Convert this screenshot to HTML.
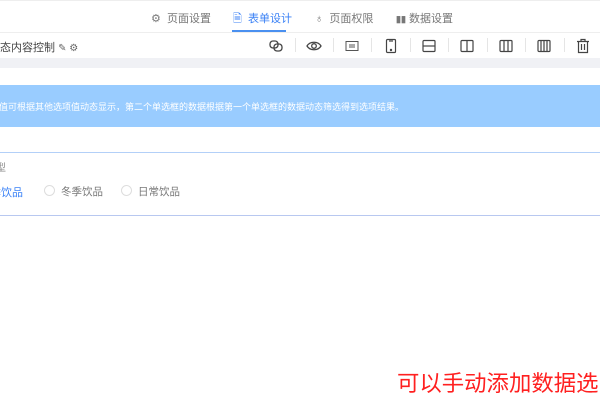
<!DOCTYPE html>
<html><head><meta charset="utf-8"><style>
*{margin:0;padding:0;box-sizing:border-box}
body{width:600px;height:400px;overflow:hidden;background:#fff;font-family:"Liberation Sans","Noto Sans CJK SC",sans-serif;position:relative}
.a{position:absolute;white-space:nowrap}
.tab{font-size:11px;color:#777;top:10px}
.sep{position:absolute;top:38px;width:1px;height:14px;background:#e5e5e5}
svg{position:absolute}
</style></head><body>
<div class="a" style="left:0;top:0;width:600px;height:1px;background:#eee"></div>
<div class="a" style="left:0;top:32px;width:600px;height:1px;background:#eee"></div>
<div class="a tab" style="left:151px">⚙&nbsp; 页面设置</div>
<div class="a tab" style="left:233px;color:#3b82f6">🗎&nbsp; 表单设计</div>
<div class="a" style="left:232px;top:30px;width:54px;height:2px;background:#4a90f0"></div>
<div class="a tab" style="left:315px">♁&nbsp; 页面权限</div>
<div class="a tab" style="left:396px"><b style="font-size:9px">▮▮</b> 数据设置</div>

<div class="a" style="left:0;top:39px;font-size:11px;color:#444">态内容控制 <span style="color:#666;font-size:10px">✎ ⚙</span></div>
<svg style="left:268px;top:39px" width="16" height="14" viewBox="0 0 16 14" fill="none" stroke="#444" stroke-width="1.3"><rect x="2" y="2" width="8" height="7" rx="3"/><rect x="6" y="5" width="8" height="7" rx="3"/></svg>
<div class="sep" style="left:295px"></div>
<svg style="left:306px;top:40px" width="16" height="12" viewBox="0 0 16 12" fill="none" stroke="#444" stroke-width="1.3"><path d="M1 6C4 1 12 1 15 6C12 11 4 11 1 6Z"/><circle cx="8" cy="6" r="2.3"/></svg>
<div class="sep" style="left:333px"></div>
<svg style="left:345px;top:40px" width="14" height="12" viewBox="0 0 14 12" fill="none" stroke="#555" stroke-width="1"><rect x="1" y="1.5" width="12" height="9"/><path d="M5 4v4M7 4v4M9 4v4"/></svg>
<div class="sep" style="left:371px"></div>
<svg style="left:385px;top:38px" width="12" height="16" viewBox="0 0 12 16" fill="none" stroke="#444" stroke-width="1.2"><rect x="1.5" y="1.5" width="9" height="13" rx="1"/><path d="M4 3h4"/><circle cx="6" cy="12" r=".6" fill="#444"/></svg>
<div class="sep" style="left:410px"></div>
<svg style="left:422px;top:39px" width="14" height="14" viewBox="0 0 14 14" fill="none" stroke="#444" stroke-width="1.2"><rect x="1" y="1.5" width="12" height="11" rx="1"/><path d="M1 7h12"/></svg>
<div class="sep" style="left:448px"></div>
<svg style="left:460px;top:39px" width="14" height="14" viewBox="0 0 14 14" fill="none" stroke="#444" stroke-width="1.2"><rect x="1" y="1.5" width="12" height="11" rx="1"/><path d="M7 1.5v11"/></svg>
<div class="sep" style="left:487px"></div>
<svg style="left:499px;top:39px" width="14" height="14" viewBox="0 0 14 14" fill="none" stroke="#444" stroke-width="1.2"><rect x="1" y="1.5" width="12" height="11" rx="1"/><path d="M5 1.5v11M9 1.5v11"/></svg>
<div class="sep" style="left:525px"></div>
<svg style="left:537px;top:39px" width="14" height="14" viewBox="0 0 14 14" fill="none" stroke="#444" stroke-width="1.2"><rect x="1" y="1.5" width="12" height="11" rx="1"/><path d="M4 1.5v11M7 1.5v11M10 1.5v11"/></svg>
<div class="sep" style="left:564px"></div>
<svg style="left:576px;top:38px" width="14" height="16" viewBox="0 0 14 16" fill="none" stroke="#444" stroke-width="1.2"><path d="M1 3.5h12M5 3.5V1.5h4v2M2.5 3.5v11h9v-11M5.5 6v6M8.5 6v6"/></svg>

<div class="a" style="left:0;top:58px;width:600px;height:10px;background:#f0f1f5"></div>

<div class="a" style="left:0;top:85px;width:600px;height:42px;background:#99ccff"></div>
<div class="a" style="left:-1px;top:100px;font-size:9px;color:#fff">值可根据其他选项值动态显示，第二个单选框的数据根据第一个单选框的数据动态筛选得到选项结果。</div>

<div class="a" style="left:0;top:152px;width:600px;height:1px;background:#b3d0f8"></div>
<div class="a" style="left:0;top:215px;width:600px;height:1px;background:#b8c8f0"></div>
<div class="a" style="left:-4px;top:159px;font-size:10px;color:#888">型</div>
<div class="a" style="left:-10px;top:184px;font-size:11px;color:#3b82f6">季饮品</div>
<div class="a" style="left:44px;top:185px;width:11px;height:11px;border:1px solid #ddd;border-radius:50%"></div>
<div class="a" style="left:61px;top:184px;font-size:10.5px;color:#777">冬季饮品</div>
<div class="a" style="left:121px;top:185px;width:11px;height:11px;border:1px solid #ddd;border-radius:50%"></div>
<div class="a" style="left:138px;top:184px;font-size:10.5px;color:#777">日常饮品</div>

<div class="a" style="left:397px;top:371px;font-size:22.4px;color:#ff2020;line-height:26px">可以手动添加数据选</div>
</body></html>
